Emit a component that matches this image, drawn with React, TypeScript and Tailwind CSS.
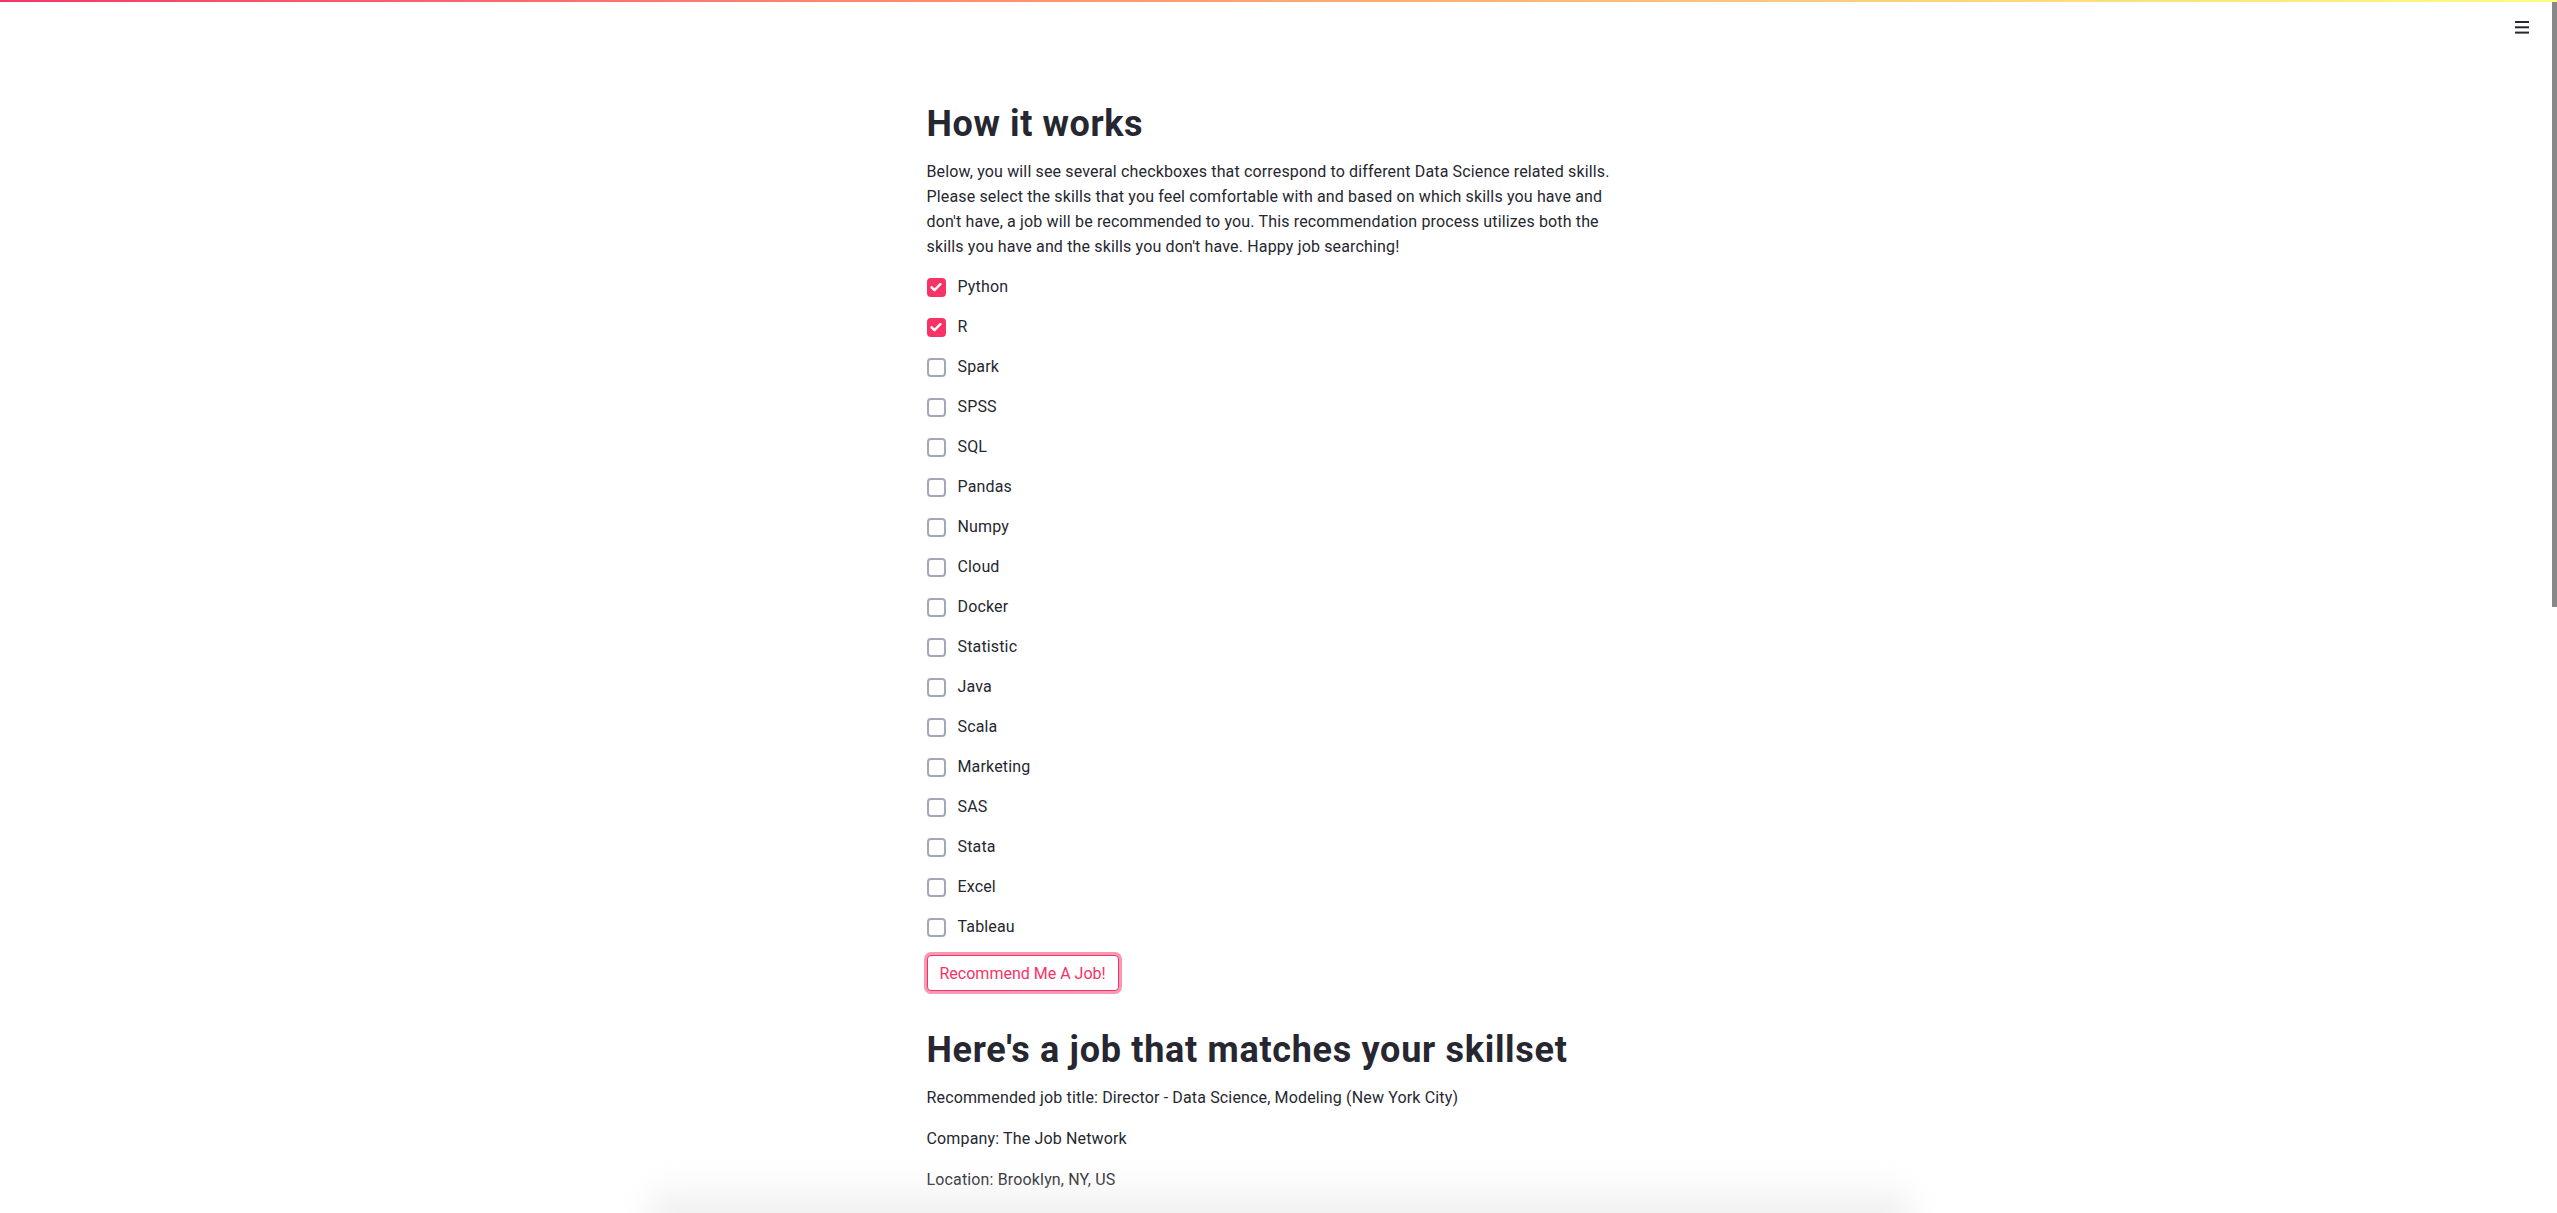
import React from "react";

const skills: { name: string; checked: boolean }[] = [
  { name: "Python", checked: true },
  { name: "R", checked: true },
  { name: "Spark", checked: false },
  { name: "SPSS", checked: false },
  { name: "SQL", checked: false },
  { name: "Pandas", checked: false },
  { name: "Numpy", checked: false },
  { name: "Cloud", checked: false },
  { name: "Docker", checked: false },
  { name: "Statistic", checked: false },
  { name: "Java", checked: false },
  { name: "Scala", checked: false },
  { name: "Marketing", checked: false },
  { name: "SAS", checked: false },
  { name: "Stata", checked: false },
  { name: "Excel", checked: false },
  { name: "Tableau", checked: false },
];

function Checkbox({ label, checked }: { label: string; checked: boolean }) {
  return (
    <label className="flex items-center h-6 mb-4 gap-3 cursor-pointer">
      {checked ? (
        <span className="w-[19px] h-[19px] rounded-[4px] bg-[#f63366] flex items-center justify-center">
          <svg width="14" height="14" viewBox="0 0 16 16" fill="none">
            <path d="M3 8.3l3.3 3.3L13 4.8" stroke="white" strokeWidth="2.8" strokeLinecap="round" strokeLinejoin="round" />
          </svg>
        </span>
      ) : (
        <span className="w-[19px] h-[19px] rounded-[4px] border-2 border-[#a3a8b8] bg-white" />
      )}
      <span className="text-base text-[#262730]">{label}</span>
    </label>
  );
}

export default function App() {
  return (
    <div className="relative w-full h-[1213px] overflow-hidden bg-white font-['Roboto',sans-serif] text-[#262730] tracking-[0.15px]">
      {/* decoration bar */}
      <div className="absolute top-0 left-0 right-0 h-[2px] bg-gradient-to-r from-[#f63366] to-[#fffd80]" />

      {/* hamburger */}
      <button className="absolute top-[15px] right-[26px] w-[18px] h-[24px] flex items-center justify-center">
        <svg width="14" height="14" viewBox="0 0 14 14">
          <rect x="0" y="1" width="14" height="2" fill="#262730" />
          <rect x="0" y="6.3" width="14" height="2" fill="#262730" />
          <rect x="0" y="11.6" width="14" height="2" fill="#262730" />
        </svg>
      </button>

      {/* overlay scrollbar */}
      <div className="absolute top-[2px] right-0 w-[5px] h-[605px] bg-[#888888]" />

      <div className="w-[704px] mx-auto pt-[103px]">
        <h1 className="text-[36px] leading-[43px] font-bold tracking-[0.6px] mb-[13px]">How it works</h1>
        <p className="text-base leading-[25px] mb-4">
          Below, you will see several checkboxes that correspond to different Data Science related skills.
          <br />
          Please select the skills that you feel comfortable with and based on which skills you have and
          <br />
          don't have, a job will be recommended to you. This recommendation process utilizes both the
          <br />
          skills you have and the skills you don't have. Happy job searching!
        </p>

        <div>
          {skills.map((s) => (
            <Checkbox key={s.name} label={s.name} checked={s.checked} />
          ))}
        </div>

        <button className="h-9 px-3 border border-[#f63366] rounded-[4px] text-[#f63366] text-base leading-[25px] tracking-normal ring-[3px] ring-[#f63366]/50 bg-white">
          Recommend Me A Job!
        </button>

        <h2 className="text-[36px] leading-[43px] font-bold tracking-[0.7px] mt-[38px] mb-[13px]">
          Here's a job that matches your skillset
        </h2>
        <p className="text-base leading-[25px] mb-4">
          Recommended job title: Director - Data Science, Modeling (New York City)
        </p>
        <p className="text-base leading-[25px] mb-4">Company: The Job Network</p>
        <p className="text-base leading-[25px] mb-4">Location: Brooklyn, NY, US</p>
        <p className="text-base leading-[25px] mb-4">
          Job description: The Job Network is seeking a Director of Data Science to lead modeling efforts across
        </p>
      </div>

      {/* bottom fade */}
      <div className="absolute bottom-[-22px] left-[650px] w-[1260px] h-[58px] bg-gradient-to-b from-white/0 to-[#e6e6e6] blur-lg" />
    </div>
  );
}
